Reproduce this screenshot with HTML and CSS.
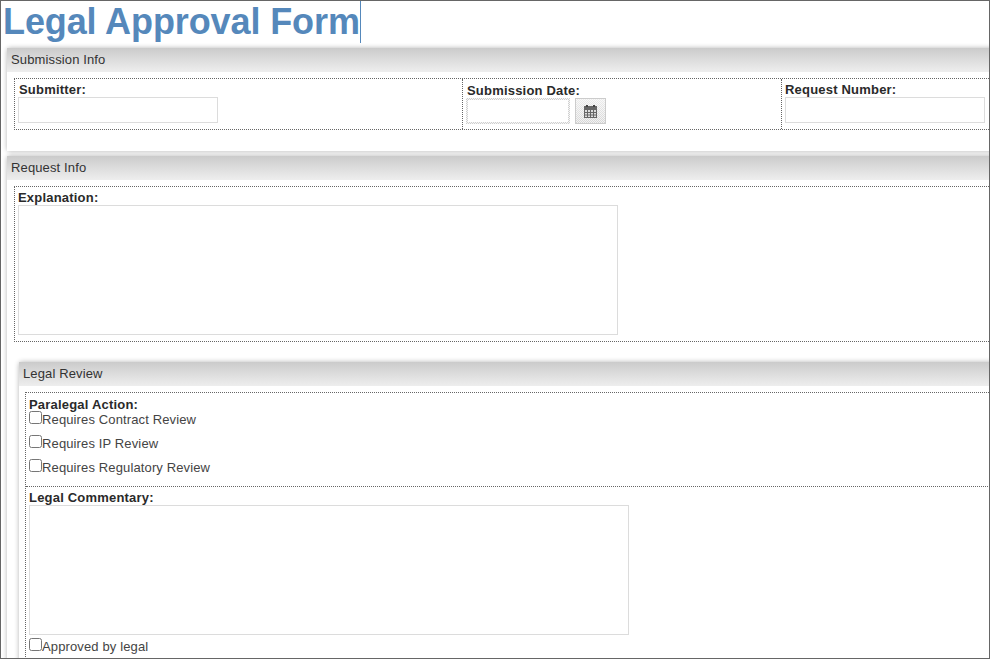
FILE: index.html
```html
<!DOCTYPE html>
<html lang="en">
<head>
<meta charset="utf-8">
<title>Legal Approval Form</title>
<link rel="stylesheet" href="styles.css">
</head>
<body>
<div class="frame">
  <h1 class="title"><span class="title-text">Legal Approval Form</span></h1>
  <section class="panel panel-first">
    <header class="panel-head">Submission Info</header>
    <div class="panel-body body-first">
      <div class="row row-three">
        <div class="cell cell-sub">
          <label class="lbl lbl-inset">Submitter:</label>
          <input class="txt" type="text">
        </div>
        <div class="cell cell-date">
          <label class="lbl lbl-inset">Submission Date:</label>
          <div class="date-line">
            <input class="txt date-input" type="text">
            <button class="cal-btn" type="button" aria-label="Pick date">
              <svg class="cal-icon" viewBox="0 0 13 13" width="13" height="13">
                <rect x="0" y="1" width="13" height="12" fill="#666"/>
                <rect x="2" y="0" width="2" height="2" fill="#444"/>
                <rect x="9" y="0" width="2" height="2" fill="#444"/>
                <path d="M1 5h11v7H1z" fill="#ddd"/>
                <path d="M3.5 5v7M6.5 5v7M9.5 5v7M1 7.5h11M1 10h11" stroke="#666" stroke-width="1" fill="none"/>
              </svg>
            </button>
          </div>
        </div>
        <div class="cell cell-num">
          <label class="lbl">Request Number:</label>
          <input class="txt" type="text">
        </div>
      </div>
    </div>
  </section>
  <section class="panel panel-second">
    <header class="panel-head">Request Info</header>
    <div class="panel-body body-second">
      <div class="row cell-expl">
        <label class="lbl">Explanation:</label>
        <textarea class="area"></textarea>
      </div>
      <section class="panel panel-nested">
        <header class="panel-head">Legal Review</header>
        <div class="panel-body body-nested">
          <div class="row-stack">
            <div class="cell-para">
              <label class="lbl">Paralegal Action:</label>
              <label class="check"><input type="checkbox">Requires Contract Review</label>
              <label class="check"><input type="checkbox">Requires IP Review</label>
              <label class="check"><input type="checkbox">Requires Regulatory Review</label>
            </div>
            <div class="cell-comm">
              <label class="lbl">Legal Commentary:</label>
              <textarea class="area"></textarea>
              <label class="check check-last"><input type="checkbox">Approved by legal</label>
            </div>
          </div>
        </div>
      </section>
    </div>
  </section>
</div>
</body>
</html>
```

FILE: styles.css
```css
* { box-sizing: border-box; }
html, body { margin: 0; padding: 0; background: #fff; }
body { font-family: "Liberation Sans", Arial, sans-serif; font-size: 13px; color: #333; }
.frame { width: 990px; height: 659px; border: 1px solid #666; overflow: hidden; background: #fff; }
.title { margin: 0; padding-left: 2px; height: 42px; font-size: 36px; line-height: 42px; font-weight: bold; letter-spacing: -.1px; color: #5588bb; }
.title-text { display: inline-block; height: 42px; border-right: 1px solid #5588bb; }
.panel { background: #fff; box-shadow: 0 0 5px rgba(0,0,0,.3); border-radius: 3px 0 0 3px; }
.panel-first { margin: 5px -20px 0 6px; }
.panel-second { margin: 5px -20px 0 6px; }
.panel-nested { margin: 20px 0 0 5px; }
.panel-head { height: 24px; line-height: 23px; padding-left: 4px; font-size: 13px; letter-spacing: .13px; color: #333; background: linear-gradient(#cbcbcb, #eeeeee); }
.panel-body { background: #fff; }
.body-first { padding: 6px 0 21px 7px; }
.body-second { padding: 6px 0 0 7px; }
.body-nested { padding: 6px 0 0 6px; }
.row { border: 1px dotted #666; }
.row-three { display: flex; height: 52px; }
.cell { padding: 3px 3px 0 3px; }
.cell-sub { width: 447px; }
.cell-date { width: 319px; border-left: 1px dotted #666; padding-top: 4px; }
.cell-num { flex: 1; border-left: 1px dotted #666; }
.lbl { display: block; font-weight: bold; font-size: 13px; line-height: 15px; letter-spacing: .2px; color: #2a2a2a; }
.lbl-inset { margin-left: 1px; }
.txt { display: block; width: 200px; height: 26px; border: 1px solid #dcdcdc; background: #fff; margin: 0; padding: 0; }
.date-line { display: flex; gap: 5px; }
.date-input { width: 104px; border: 2px solid transparent; background: linear-gradient(#fff, #fff) padding-box, conic-gradient(#cfcfcf 25%, #f6f6f6 0 50%, #cfcfcf 0 75%, #f6f6f6 0) 0 0 / 2px 2px border-box; }
.cal-btn { width: 31px; height: 26px; padding: 0; border: 1px solid #ccc; background: linear-gradient(rgba(255,255,255,.55), rgba(255,255,255,0)), conic-gradient(#d6d6d6 25%, #f2f2f2 0 50%, #d6d6d6 0 75%, #f2f2f2 0) 0 0 / 2px 2px; display: flex; align-items: center; justify-content: center; }
.cal-icon { display: block; }
.area { display: block; width: 600px; height: 130px; border: 1px solid #dcdcdc; background: #fff; margin: 0; padding: 0; resize: none; }
.cell-expl { height: 156px; padding: 3px 3px 0 3px; }
.row-stack { border: 1px dotted #666; border-bottom: 0; }
.cell-para { padding: 4px 3px 0 3px; height: 94px; border-bottom: 1px dotted #666; }
.cell-comm { padding: 3px 3px 0 3px; }
.check { display: flex; align-items: flex-start; height: 24px; line-height: 15px; font-size: 13px; letter-spacing: .13px; color: #444; }
.check input { width: 13px; height: 13px; margin: -1px 0 0 0; flex: none; }
.check-last { margin-top: 4px; }
```
